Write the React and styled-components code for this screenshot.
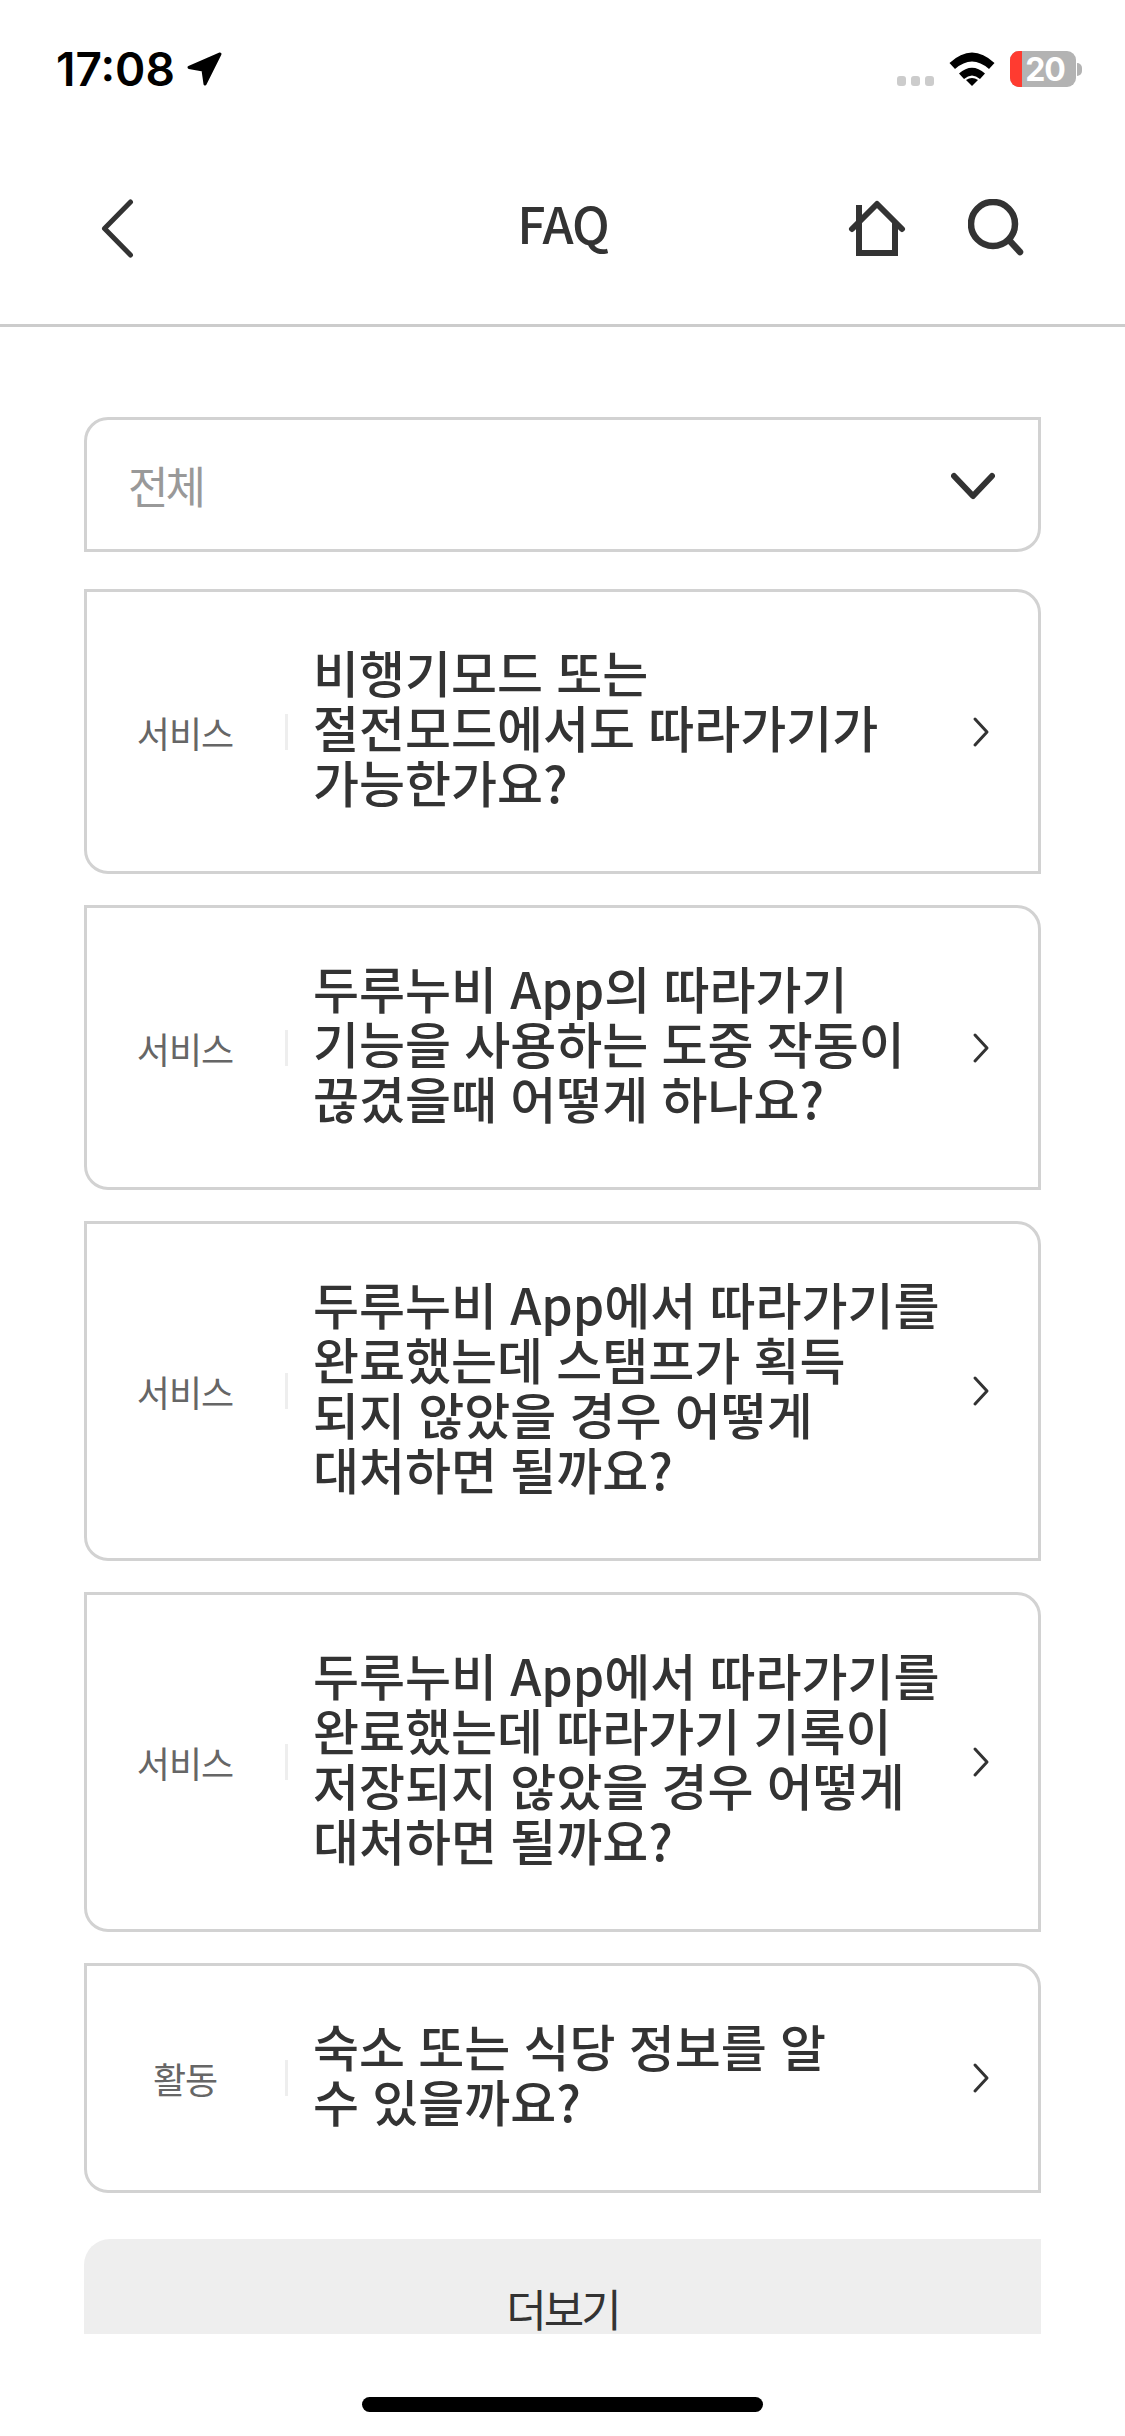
import React from "react";
import styled, { createGlobalStyle } from "styled-components";

const faqs = [
  { tag: "서비스", lines: ["비행기모드 또는", "절전모드에서도 따라가기가", "가능한가요?"] },
  { tag: "서비스", lines: ["두루누비 App의 따라가기", "기능을 사용하는 도중 작동이", "끊겼을때 어떻게 하나요?"] },
  { tag: "서비스", lines: ["두루누비 App에서 따라가기를", "완료했는데 스탬프가 획득", "되지 않았을 경우 어떻게", "대처하면 될까요?"] },
  { tag: "서비스", lines: ["두루누비 App에서 따라가기를", "완료했는데 따라가기 기록이", "저장되지 않았을 경우 어떻게", "대처하면 될까요?"] },
  { tag: "활동", lines: ["숙소 또는 식당 정보를 알", "수 있을까요?"] },
];

const App = () => {
  return (
    <>
      <GlobalStyle />
      <Page>
        <StatusBar>
          <Clock>
            17:08
            <svg width="38" height="38" viewBox="0 0 38 38">
              <path d="M34 4 L3 17.5 L17 20 L19 34 Z" fill="#000" stroke="#000" strokeWidth="3" strokeLinejoin="round" />
            </svg>
          </Clock>
          <StatusIcons>
            <Dots>
              <i /><i /><i />
            </Dots>
            <WifiIcon width="46" height="34" viewBox="0 0 46 34">
              <path d="M0.5 11 Q23 -10 45.5 11 L40 17 Q23 2 6 17 Z" fill="#000" />
              <path d="M10 21.5 Q23 10 36 21.5 L31 27 Q23 20 15 27 Z" fill="#000" />
              <path d="M23 34 L17 28 Q23 24 29 28 Z" fill="#000" />
            </WifiIcon>
            <Battery>
              <BatteryBody>
                <BatteryLevel />
                <BatteryText>20</BatteryText>
              </BatteryBody>
              <BatteryCap />
            </Battery>
          </StatusIcons>
        </StatusBar>

        <NavBar>
          <svg width="34" height="60" viewBox="0 0 34 60" fill="none" stroke="#333" strokeWidth="5" strokeLinecap="round" strokeLinejoin="round">
            <path d="M30.5 3 L4.5 29.5 L30.5 56" />
          </svg>
          <NavTitle>FAQ</NavTitle>
          <NavActions>
            <svg width="58" height="58" viewBox="0 0 58 58" fill="none" stroke="#333" strokeWidth="6">
              <path d="M4 30 L29 5 L54 30" strokeLinecap="round" strokeLinejoin="round" />
              <path d="M11 6 V54 H47 V23" />
            </svg>
            <svg width="58" height="58" viewBox="0 0 58 58" fill="none" stroke="#333" strokeWidth="6.5" strokeLinecap="round">
              <circle cx="25" cy="25" r="22" />
              <path d="M41 41 L52 53" />
            </svg>
          </NavActions>
        </NavBar>

        <Content>
          <Select>
            <SelectLabel>전체</SelectLabel>
            <SelectChevron width="44" height="28" viewBox="0 0 44 28" fill="none" stroke="#333" strokeWidth="6" strokeLinecap="round" strokeLinejoin="round">
              <path d="M3 4 L22 24 L41 4" />
            </SelectChevron>
          </Select>

          {faqs.map((faq) => (
            <Card key={faq.lines[0] + faq.lines[1]}>
              <Tag>{faq.tag}</Tag>
              <Question>
                <QuestionLines>
                  {faq.lines.map((line) => (
                    <div key={line}>{line}</div>
                  ))}
                </QuestionLines>
              </Question>
              <svg width="20" height="32" viewBox="0 0 20 32" fill="none" stroke="#333" strokeWidth="3" strokeLinecap="round" strokeLinejoin="round">
                <path d="M4 3 L16 16 L4 29" />
              </svg>
            </Card>
          ))}

          <MoreButton>더보기</MoreButton>
        </Content>

        <HomeArea>
          <HomeBar />
        </HomeArea>
      </Page>
    </>
  );
};

export default App;

const GlobalStyle = createGlobalStyle`
  html, body {
    margin: 0;
    padding: 0;
    background: #fff;
  }
  body {
    font-family: "Noto Sans CJK KR", "Noto Sans", sans-serif;
  }
`;

const Page = styled.div`
  width: 1125px;
  height: 2436px;
  display: flex;
  flex-direction: column;
  overflow: hidden;
  background: #fff;
`;

const StatusBar = styled.div`
  height: 132px;
  flex: none;
  box-sizing: border-box;
  display: flex;
  justify-content: space-between;
  align-items: flex-start;
  padding: 46px 43px 0 56px;
`;

const Clock = styled.div`
  display: flex;
  align-items: center;
  gap: 11px;
  font-family: "Inter", sans-serif;
  font-size: 46px;
  line-height: 46px;
  font-weight: 600;
  color: #000;
`;

const StatusIcons = styled.div`
  display: flex;
  align-items: flex-start;
  gap: 15px;
  margin-top: 5px;
`;

const WifiIcon = styled.svg`
  margin-top: 1px;
`;

const Dots = styled.div`
  display: flex;
  gap: 5px;
  margin-top: 25px;

  i {
    display: block;
    width: 9px;
    height: 10px;
    border-radius: 3px;
    background: #ccc;
  }
`;

const Battery = styled.div`
  display: flex;
  align-items: center;
  gap: 1px;
`;

const BatteryBody = styled.div`
  position: relative;
  width: 66px;
  height: 36px;
  border-radius: 9px;
  overflow: hidden;
  background: #b3b3b3;
  display: flex;
  align-items: center;
  justify-content: center;
`;

const BatteryLevel = styled.div`
  position: absolute;
  left: 0;
  top: 0;
  bottom: 0;
  width: 12px;
  background: #ff3b30;
`;

const BatteryText = styled.span`
  position: relative;
  left: 2px;
  font-family: "Inter", sans-serif;
  font-size: 32px;
  font-weight: 700;
  letter-spacing: -1px;
  color: #fff;
`;

const BatteryCap = styled.div`
  width: 5px;
  height: 13px;
  border-radius: 0 6px 6px 0;
  background: #b3b3b3;
`;

const NavBar = styled.div`
  flex: none;
  height: 195px;
  box-sizing: border-box;
  display: grid;
  grid-template-columns: 1fr auto 1fr;
  align-items: start;
  padding: 67px 99px 0 100px;
  border-bottom: 3px solid #ccc;
`;

const NavTitle = styled.h1`
  margin: 0;
  font-family: "Noto Sans CJK KR", sans-serif;
  font-size: 50px;
  line-height: 46px;
  font-weight: 500;
  letter-spacing: -1px;
  color: #333;
`;

const NavActions = styled.div`
  display: flex;
  justify-content: flex-end;
  gap: 62px;
`;

const Content = styled.div`
  flex: none;
  height: 2007px;
  box-sizing: border-box;
  padding: 90px 84px 0;
  display: flex;
  flex-direction: column;
  gap: 31px;
  overflow: hidden;
`;

const Select = styled.div`
  flex: none;
  height: 135px;
  margin-bottom: 6px;
  box-sizing: border-box;
  padding: 0 43px 0 41px;
  display: flex;
  align-items: center;
  justify-content: space-between;
  border: 3px solid #d2d2d2;
  border-radius: 24px 0 24px 0;
`;

const SelectLabel = styled.span`
  font-size: 44px;
  letter-spacing: -3px;
  color: #999;
`;

const SelectChevron = styled.svg`
  margin-top: 3px;
`;

const Card = styled.div`
  flex: none;
  box-sizing: border-box;
  padding: 57px 47px 57px 48px;
  display: flex;
  align-items: center;
  border: 3px solid #d2d2d2;
  border-radius: 0 24px 0 24px;
`;

const Tag = styled.div`
  flex: none;
  width: 100px;
  margin-right: 50px;
  font-size: 36px;
  line-height: 40px;
  letter-spacing: -1px;
  text-align: center;
  color: #666;
`;

const Question = styled.div`
  flex: 1;
  position: relative;
  padding-left: 28px;
  font-size: 50px;
  line-height: 55px;
  font-weight: 500;
  word-spacing: 2px;
  color: #333;

  &::before {
    content: "";
    position: absolute;
    left: 0;
    top: 50%;
    width: 3px;
    height: 36px;
    margin-top: -18px;
    background: #eee;
  }
`;

const QuestionLines = styled.div`
  margin: -5px 0 5px;
`;

const MoreButton = styled.div`
  flex: none;
  height: 130px;
  margin-top: 15px;
  padding-top: 39px;
  box-sizing: border-box;
  border-radius: 26px 0 0 0;
  background: #eee;
  text-align: center;
  font-size: 44px;
  line-height: 60px;
  letter-spacing: -3px;
  color: #333;
`;

const HomeArea = styled.div`
  flex: 1;
  display: flex;
  justify-content: center;
`;

const HomeBar = styled.div`
  width: 401px;
  height: 15px;
  margin-top: 63px;
  border-radius: 8px;
  background: #000;
`;
